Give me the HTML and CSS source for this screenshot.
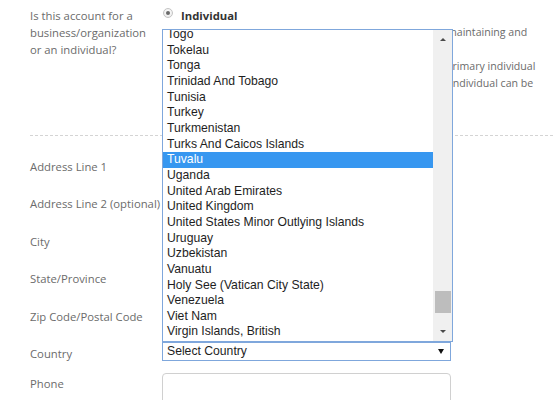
FILE: index.html
```html
<!DOCTYPE html>
<html>
<head>
<meta charset="utf-8">
<link rel="stylesheet" href="styles.css">
</head>
<body>
<form class="form">
  <div class="account">
    <div class="label account-label">Is this account for a business/organization or an individual?</div>
    <div class="account-field">
      <div class="radio-row"><span class="radio"><span class="radio-dot"></span></span><span class="radio-text">Individual</span></div>
      <p class="desc"><span class="line"><span class="pre pre1"></span><span>maintaining and</span></span></p>
      <p class="desc desc2"><span class="line"><span class="pre pre2"></span><span>primary individual</span></span><span class="line"><span class="pre pre3"></span><span>individual can be</span></span></p>
    </div>
  </div>
  <div class="sep"></div>
  <div class="rows">
    <div class="row"><div class="label">Address Line 1</div><div class="field"><div class="input"></div></div></div>
    <div class="row"><div class="label">Address Line 2 (optional)</div><div class="field"><div class="input"></div></div></div>
    <div class="row"><div class="label">City</div><div class="field"><div class="input"></div></div></div>
    <div class="row"><div class="label">State/Province</div><div class="field"><div class="input"></div></div></div>
    <div class="row"><div class="label">Zip Code/Postal Code</div><div class="field"><div class="input"></div></div></div>
    <div class="row row-country">
      <div class="label">Country</div>
      <div class="field">
        <div class="select-wrap">
          <div class="listbox">
            <div class="items">
              <div class="item">Togo</div>
              <div class="item">Tokelau</div>
              <div class="item">Tonga</div>
              <div class="item">Trinidad And Tobago</div>
              <div class="item">Tunisia</div>
              <div class="item">Turkey</div>
              <div class="item">Turkmenistan</div>
              <div class="item">Turks And Caicos Islands</div>
              <div class="item selected">Tuvalu</div>
              <div class="item">Uganda</div>
              <div class="item">United Arab Emirates</div>
              <div class="item">United Kingdom</div>
              <div class="item">United States Minor Outlying Islands</div>
              <div class="item">Uruguay</div>
              <div class="item">Uzbekistan</div>
              <div class="item">Vanuatu</div>
              <div class="item">Holy See (Vatican City State)</div>
              <div class="item">Venezuela</div>
              <div class="item">Viet Nam</div>
              <div class="item">Virgin Islands, British</div>
              <div class="item">Virgin Islands, U.S.</div>
            </div>
            <div class="scrollbar">
              <span class="arrow-up"></span>
              <span class="thumb"></span>
              <span class="arrow-down"></span>
            </div>
          </div>
          <div class="select"><span>Select Country</span><span class="caret"></span></div>
        </div>
      </div>
    </div>
    <div class="row row-phone"><div class="label">Phone</div><div class="field"><div class="input phone"></div></div></div>
  </div>
</form>
</body>
</html>
```

FILE: styles.css
```css
html, body {
  margin: 0;
  padding: 0;
  background: #ffffff;
}
body {
  font-family: "Open Sans", "DejaVu Sans", sans-serif;
  font-size: 11.3px;
  line-height: 17px;
  color: #6b6b6b;
  overflow: hidden;
  width: 553px;
  height: 400px;
}
.form {
  margin: 0;
}
.account {
  display: grid;
  grid-template-columns: 162px 391px;
  padding-top: 6.5px;
}
.label {
  padding-left: 30px;
  color: #6b6b6b;
  white-space: nowrap;
}
.account-label {
  white-space: normal;
  width: 122px;
}
.account-field {
  display: flex;
  flex-direction: column;
}
.radio-row {
  display: flex;
  align-items: center;
  height: 17px;
}
.radio {
  width: 10px;
  height: 10px;
  margin-top: -5px;
  margin-left: 1px;
  border-radius: 50%;
  border: 1px solid #c4c4c4;
  background: radial-gradient(circle at 50% 40%, #ffffff 0%, #e6e6e6 100%);
  display: flex;
  align-items: center;
  justify-content: center;
  box-sizing: border-box;
}
.radio-dot {
  width: 4px;
  height: 4px;
  border-radius: 50%;
  background: #6a6a6a;
}
.radio-text {
  margin-left: 8px;
  font-weight: bold;
  color: #333333;
}
.desc {
  margin: 0;
  padding-left: 19px;
  font-size: 10.6px;
}
.desc2 {
  margin-top: 17px;
}
.line {
  display: flex;
  white-space: nowrap;
}
.pre {
  flex: none;
}
.pre1 { width: 266px; }
.pre2 { width: 265px; }
.pre3 { width: 269px; }
.sep {
  margin-top: 43.5px;
  margin-left: 30px;
  border-top: 1px dashed #d4d4d4;
}
.rows {
  padding-top: 12px;
}
.row {
  display: grid;
  grid-template-columns: 162px 291px;
  height: 37.5px;
}
.row .label {
  padding-top: 9.5px;
}
.input {
  margin-top: 4px;
  height: 30px;
  width: 289px;
  box-sizing: border-box;
  border: 1px solid #d0d0d0;
  border-radius: 4px;
  background: #fff;
}
.row-country {
  height: 29.5px;
}
.select-wrap {
  position: relative;
  z-index: 10;
  margin-top: 6.5px;
  width: 289px;
}
.select {
  height: 19px;
  box-sizing: border-box;
  border: 1px solid #7fa7dc;
  background: #fff;
  display: flex;
  align-items: center;
  justify-content: space-between;
  padding-left: 4px;
  padding-right: 6px;
  font-family: "Liberation Sans", Arial, sans-serif;
  font-size: 12.2px;
  color: #1e1e1e;
}
.caret {
  width: 0;
  height: 0;
  border-left: 3px solid transparent;
  border-right: 3px solid transparent;
  border-top: 5px solid #111;
}
.listbox {
  position: absolute;
  z-index: 10;
  left: 0;
  bottom: 100%;
  width: 291px;
  height: 313px;
  box-sizing: border-box;
  border: 1px solid #7fa7dc;
  background: #fff;
  overflow: hidden;
  font-family: "Liberation Sans", Arial, sans-serif;
  font-size: 12.2px;
  color: #1e1e1e;
}
.items {
  margin-top: -3px;
  width: 270px;
}
.item {
  height: 15.67px;
  line-height: 15.67px;
  padding-left: 4px;
  white-space: nowrap;
}
.item.selected {
  background: #3797f0;
  color: #ffffff;
}
.scrollbar {
  position: absolute;
  top: 0;
  right: 0;
  bottom: 0;
  width: 19px;
  background: #f0f0f0;
}
.arrow-up {
  position: absolute;
  top: 8px;
  left: 7px;
  width: 0;
  height: 0;
  border-left: 3px solid transparent;
  border-right: 3px solid transparent;
  border-bottom: 3px solid #4a4a4a;
}
.arrow-down {
  position: absolute;
  bottom: 8px;
  left: 7px;
  width: 0;
  height: 0;
  border-left: 3px solid transparent;
  border-right: 3px solid transparent;
  border-top: 3px solid #4a4a4a;
}
.thumb {
  position: absolute;
  top: 261px;
  left: 2px;
  width: 16px;
  height: 22px;
  background: #bdbdbd;
}
.row-phone {
  height: 35px;
}
.phone {
  margin-top: 8px;
  height: 34px;
}
```
